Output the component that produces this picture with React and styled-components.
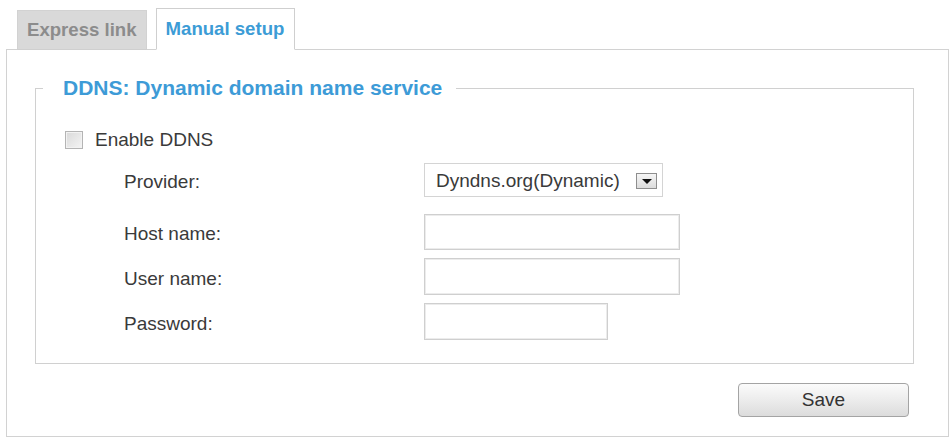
import React from "react";
import styled, { createGlobalStyle } from "styled-components";

const Global = createGlobalStyle`
  html, body { margin: 0; padding: 0; background: #ffffff; }
  body { font-family: "Liberation Sans", Arial, sans-serif; color: #3a3a3a; }
  * { box-sizing: border-box; }
`;

const Page = styled.div`
  width: 949px;
  padding: 8px 0 0 6px;
`;

const TabBar = styled.div`
  display: flex;
  align-items: flex-end;
  gap: 9px;
  padding-left: 11px;
  margin-bottom: -1px;
  position: relative;
  z-index: 1;
`;

const Tab = styled.div`
  height: ${(p) => (p.$active ? "42px" : "40px")};
  padding: 0 ${(p) => (p.$active ? "10px" : "9px")} 0 9px;
  display: flex;
  align-items: center;
  font-size: 18.6px;
  font-weight: bold;
  color: ${(p) => (p.$active ? "#3c9cd6" : "#8c8c8c")};
  background: ${(p) => (p.$active ? "#ffffff" : "#d9d9d9")};
  border: 1px solid ${(p) => (p.$active ? "#cfcfcf" : "#d2d2d2")};
  border-bottom-color: ${(p) => (p.$active ? "#ffffff" : "#cfcfcf")};
  cursor: pointer;
`;

const Panel = styled.div`
  border: 1px solid #d2d2d2;
  height: 388px;
  padding: 26px 34px 0 28px;
  display: flex;
  flex-direction: column;
`;

const Fieldset = styled.fieldset`
  margin: 0;
  padding: 0;
  min-width: 0;
  border: 1px solid #d0d0d0;
`;

const Legend = styled.legend`
  margin-left: 7px;
  padding: 0 14px 0 20px;
  font-size: 21px;
  line-height: 24px;
  font-weight: bold;
  color: #3d9bd7;
`;

const FieldBody = styled.div`
  padding: 30px 0 23px 29px;
  display: flex;
  flex-direction: column;
  gap: 13px;
`;

const CheckRow = styled.label`
  display: flex;
  align-items: center;
  gap: 12px;
  height: 20px;
  font-size: 19px;
  color: #3a3a3a;
`;

const CheckBox = styled.span`
  width: 18px;
  height: 18px;
  border: 1px solid #b4b4b4;
  background: linear-gradient(135deg, #d9d9d9, #f4f4f4);
  box-shadow: inset 0 0 0 1px #f2f2f2;
`;

const FormList = styled.div`
  display: flex;
  flex-direction: column;
  gap: 8px;
  margin-left: 59px;
`;

const FormRow = styled.div`
  display: grid;
  grid-template-columns: 300px auto;
  height: ${(p) => p.$h}px;
  margin-top: ${(p) => p.$space || 0}px;
`;

const Label = styled.div`
  display: flex;
  align-items: center;
  padding-top: 4px;
  font-size: 19px;
  color: #3a3a3a;
`;

const SelectBox = styled.div`
  width: 239px;
  display: flex;
  align-items: center;
  justify-content: space-between;
  padding: 2px 5px 0 11px;
  border: 1px solid #d4d4d4;
  background: #ffffff;
  font-size: 19px;
  color: #3a3a3a;
`;

const DropButton = styled.span`
  width: 21px;
  height: 16px;
  border: 1px solid #8e8e8e;
  background: linear-gradient(#f6f6f6, #dcdcdc);
  display: flex;
  align-items: center;
  justify-content: center;
  &::after {
    content: "";
    border-left: 5px solid transparent;
    border-right: 5px solid transparent;
    border-top: 5px solid #111111;
    margin-top: 1px;
  }
`;

const TextInput = styled.input`
  width: ${(p) => p.$w}px;
  height: 100%;
  margin: 0;
  border: 1px solid #cfcfcf;
  box-shadow: inset 0 0 0 1px #ececec;
  background: #ffffff;
  font: 19px "Liberation Sans", Arial, sans-serif;
  outline: none;
`;

const Actions = styled.div`
  display: flex;
  justify-content: flex-end;
  padding: 19px 5px 0 0;
`;

const SaveButton = styled.button`
  width: 171px;
  height: 34px;
  border: 1px solid #a4a4a4;
  border-radius: 4px;
  background: linear-gradient(#fbfbfb, #ececec 50%, #dcdcdc);
  font: 19px "Liberation Sans", Arial, sans-serif;
  color: #333333;
  cursor: pointer;
`;

export default function App() {
  return (
    <Page>
      <Global />
      <TabBar>
        <Tab>Express link</Tab>
        <Tab $active>Manual setup</Tab>
      </TabBar>
      <Panel>
        <Fieldset>
          <Legend>DDNS: Dynamic domain name service</Legend>
          <FieldBody>
            <CheckRow>
              <CheckBox />
              Enable DDNS
            </CheckRow>
            <FormList>
              <FormRow $h={34}>
                <Label>Provider:</Label>
                <SelectBox>
                  <span>Dyndns.org(Dynamic)</span>
                  <DropButton />
                </SelectBox>
              </FormRow>
              <FormRow $h={36} $space={9}>
                <Label>Host name:</Label>
                <TextInput $w={256} />
              </FormRow>
              <FormRow $h={37}>
                <Label>User name:</Label>
                <TextInput $w={256} />
              </FormRow>
              <FormRow $h={37}>
                <Label>Password:</Label>
                <TextInput $w={184} type="password" />
              </FormRow>
            </FormList>
          </FieldBody>
        </Fieldset>
        <Actions>
          <SaveButton>Save</SaveButton>
        </Actions>
      </Panel>
    </Page>
  );
}
